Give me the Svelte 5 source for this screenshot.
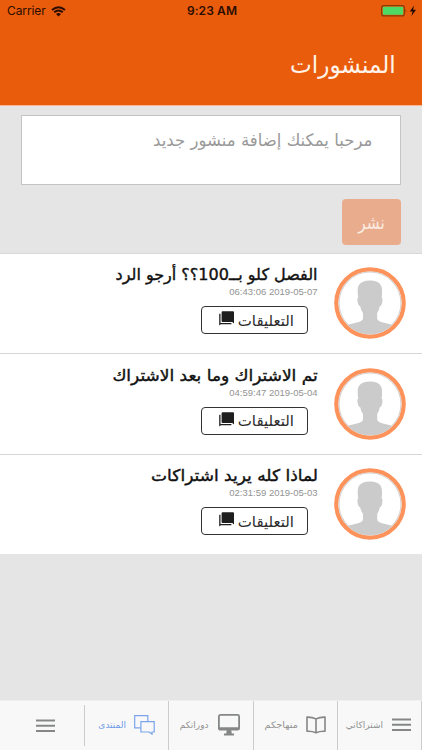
<script lang="ts">
  type Post = { title: string; date: string; stretch: number };

  const posts: Post[] = [
    { title: 'الفصل كلو بــ100؟؟ أرجو الرد', date: '06:43:06 2019-05-07', stretch: 1 },
    { title: 'تم الاشتراك وما بعد الاشتراك', date: '04:59:47 2019-05-04', stretch: 1.06 },
    { title: 'لماذا كله يريد اشتراكات', date: '02:31:59 2019-05-03', stretch: 1.063 },
  ];
</script>

<div class="app" dir="rtl">
  <header>
    <div class="status" dir="ltr">
      <div class="carrier">
        <span>Carrier</span>
        <svg width="15" height="11" viewBox="0 0 15 11" fill="none" stroke="#2b0d00">
          <path d="M1 4 Q7.5 -1.6 14 4" stroke-width="2" />
          <path d="M3.2 6.3 Q7.5 2.6 11.8 6.3" stroke-width="1.9" />
          <path d="M5 7.9 Q7.5 6 10 7.9 L7.5 10.6 Z" fill="#2b0d00" stroke="none" />
        </svg>
      </div>
      <b>9:23 AM</b>
      <div class="power">
        <svg width="36" height="12" viewBox="0 0 36 12">
          <rect x="0.6" y="0.6" width="22.8" height="10.3" rx="2.2" fill="none" stroke="#8b3a08" stroke-width="1.2" />
          <rect x="1.8" y="1.8" width="20.4" height="7.9" rx="1" fill="#4cd964" />
          <path d="M24.6 3.8 q1.6 2 0 4 z" fill="#8b3a08" />
          <path d="M33 0.5 L28.8 6.5 H31.6 L30.5 11 L35 4.8 H32.1 Z" fill="#1d0900" />
        </svg>
      </div>
    </div>
    <h1><span>المنشورات</span></h1>
  </header>

  <section class="compose">
    <div class="input"><span>مرحبا يمكنك إضافة منشور جديد</span></div>
    <button class="publish"><span>نشر</span></button>
  </section>

  <main>
    {#each posts as post}
      <article>
        <svg class="avatar" width="72" height="72" viewBox="0 0 72 72">
          <circle cx="36" cy="36" r="33.7" fill="#fff" stroke="#fd925a" stroke-width="4.2" />
          <circle cx="36" cy="36" r="31" fill="none" stroke="#d9d3d0" stroke-width="1.2" />
          <path
            d="M14 58 Q17 56.6 24 55.2 Q29 54 29 51 V46 Q26.8 43 26.2 39.3 Q24 39 23.4 33 Q23.3 31 24.2 30.6 Q23 22 24.6 18.5 Q27.5 13.4 36 13.4 Q44.5 13.4 47 18.5 Q48.8 22 47.6 30.6 Q48.7 31 48.5 33 Q48 39 45.8 39.3 Q45.2 43 43.2 46 V51 Q43.2 54 48 55.2 Q55 56.6 58 58 Q50 67 36 67 Q22 67 14 58 Z"
            fill="#cbcbcb"
          />
        </svg>
        <div class="body">
          <h2><span style:transform="scaleX({post.stretch})">{post.title}</span></h2>
          <time dir="ltr">{post.date}</time>
          <button class="comments">
            <span>التعليقات</span>
            <svg width="15" height="15" viewBox="0 0 15 15" fill="#1e1e1e">
              <path d="M3.6 0.3 H14 Q15 0.3 15 1.3 V12.4 L13.2 11 H3.6 Q2.6 11 2.6 10 V1.3 Q2.6 0.3 3.6 0.3 Z" />
              <path d="M0.2 2.8 H1.5 V12 H12.4 V13.3 H1.8 L0.2 14.4 Z" />
            </svg>
          </button>
        </div>
      </article>
    {/each}
  </main>

  <nav>
    <div class="tab subs">
      <svg width="19" height="14" viewBox="0 0 19 14" stroke="#858786" stroke-width="2">
        <path d="M0 1.5 H19 M0 6.8 H19 M0 12 H19" />
      </svg>
      <span>اشتراكاتي</span>
    </div>
    <div class="tab books">
      <svg width="20" height="18" viewBox="0 0 20 18" fill="none" stroke="#858786" stroke-width="1.6" stroke-linejoin="round">
        <path d="M10 2.9 Q6 0.9 1 1.1 V15.3 Q6 15 10 16.8 Q14 15 19 15.3 V1.1 Q14 0.9 10 2.9 Z M10 2.9 V16.8" />
      </svg>
      <span>منهاجكم</span>
    </div>
    <div class="tab courses">
      <svg width="22" height="22" viewBox="0 0 22 22">
        <rect x="0.9" y="0.9" width="20.2" height="14.8" rx="1.5" fill="none" stroke="#858786" stroke-width="1.8" />
        <path d="M1 13.3 H21 V16 H1 Z M8.8 16 H13.2 L13.8 19.6 H16 V21.4 H6 V19.6 H8.2 Z" fill="#858786" />
      </svg>
      <span>دوراتكم</span>
    </div>
    <div class="tab forum">
      <svg width="21" height="20" viewBox="0 0 21 20" fill="none" stroke="#7ba4ea" stroke-width="1.2">
        <path d="M6.5 12.8 H0.7 V0.7 H13.8 V6.7" />
        <path d="M6.9 6.7 H20.2 V17 H18 V19.2 L15.2 17 H6.9 Z" />
      </svg>
      <span>المنتدى</span>
    </div>
    <div class="tab menu">
      <svg width="19" height="14" viewBox="0 0 19 14" stroke="#858786" stroke-width="2">
        <path d="M0 1.5 H19 M0 6.8 H19 M0 12 H19" />
      </svg>
    </div>
  </nav>
</div>

<style>
  :global(body) {
    margin: 0;
    background: #e5e5e5;
  }
  .app {
    width: 422px;
    height: 750px;
    display: flex;
    flex-direction: column;
    overflow: hidden;
    background: #e5e5e5;
    font-family: 'DejaVu Sans', sans-serif;
  }
  span {
    display: inline-block;
    white-space: nowrap;
    transform-origin: right;
  }
  button {
    font-family: inherit;
    padding: 0;
  }
  header {
    height: 105px;
    flex: none;
    background: #e95c0c;
    border-bottom: 1px solid #f9b795;
  }
  .status {
    height: 22px;
    display: grid;
    grid-template-columns: 1fr auto 1fr;
    align-items: center;
    padding: 0 5px 0 7px;
    font: 12px/22px Inter, sans-serif;
    color: #2b0d00;
  }
  .carrier {
    display: flex;
    align-items: center;
    gap: 5px;
  }
  .carrier span {
    letter-spacing: -0.1px;
  }
  .status b {
    font-weight: 600;
    letter-spacing: 0.1px;
  }
  .power {
    display: flex;
    justify-content: flex-end;
  }
  h1 {
    margin: 22px 26px 0;
    font-size: 24px;
    line-height: 42px;
    font-weight: 400;
    color: #fff3e9;
  }
  h1 span {
    transform: scaleX(0.963);
  }
  .compose {
    height: 147px;
    flex: none;
    box-sizing: border-box;
    padding: 9px 21px 0;
    display: flex;
    flex-direction: column;
    align-items: flex-start;
    gap: 14px;
  }
  .input {
    width: 380px;
    height: 70px;
    box-sizing: border-box;
    border: 1px solid #c4c4c4;
    background: #fff;
    padding: 10px 28px;
    font-size: 17px;
    line-height: 28px;
    color: #999;
  }
  .input span {
    transform: scaleX(0.973);
  }
  .publish {
    width: 59px;
    height: 46px;
    border: 0;
    border-radius: 4px;
    background: #e9ad8e;
    color: #fbebe2;
    font-size: 18px;
  }
  .publish span {
    transform: scaleX(0.85);
    transform-origin: center;
  }
  main {
    flex: none;
    background: #fff;
    border-top: 1px solid #d9d9dc;
  }
  article {
    height: 100.4px;
    box-sizing: border-box;
    display: flex;
    gap: 16.5px;
    padding: 13.4px 16px 0;
    border-bottom: 1px solid #d4d4d9;
  }
  article:last-child {
    border-bottom-color: #e5e5e5;
  }
  .avatar {
    flex: none;
  }
  .body {
    display: flex;
    flex-direction: column;
    align-items: flex-start;
  }
  h2 {
    margin: 0;
    height: 19px;
    font-size: 16px;
    line-height: 16px;
    font-weight: 400;
    color: #111;
    -webkit-text-stroke: 0.4px #111;
  }
  time {
    height: 20px;
    font: 9.5px/12px 'Liberation Sans', sans-serif;
    color: #939393;
  }
  .comments {
    width: 107px;
    height: 28px;
    box-sizing: border-box;
    margin-right: 9.5px;
    padding: 1px 13px 0 0;
    display: flex;
    align-items: center;
    gap: 4px;
    border: 1px solid #333;
    border-radius: 4px;
    background: #fff;
    font-size: 15px;
    color: #2c2c2c;
  }
  .comments svg {
    margin-bottom: 4px;
  }
  nav {
    height: 50px;
    margin-top: auto;
    display: grid;
    grid-template-columns: 85px 84.5px 84.5px 84.5px 83.5px;
    background: #f8f8f8;
    border-top: 1px solid #efefef;
    box-sizing: border-box;
  }
  .tab {
    display: flex;
    align-items: center;
    gap: 9px;
    box-sizing: border-box;
    padding: 0 9px 2px 0;
    border-left: 1px solid #cfcbcd;
    font-size: 9px;
    color: #929292;
  }
  .subs {
    padding-right: 10px;
    border-right: 1px solid #cfcbcd;
  }
  .books {
    padding-right: 11px;
    gap: 8px;
  }
  .books span {
    transform: scaleX(1.08);
  }
  .courses {
    padding-right: 13px;
  }
  .forum {
    height: 41px;
    align-self: center;
    padding: 0 13px 2px 0;
    gap: 8px;
    color: #6f9be8;
  }
  .menu {
    justify-content: flex-end;
    padding: 0 0 0 36px;
    border: 0;
  }
</style>
